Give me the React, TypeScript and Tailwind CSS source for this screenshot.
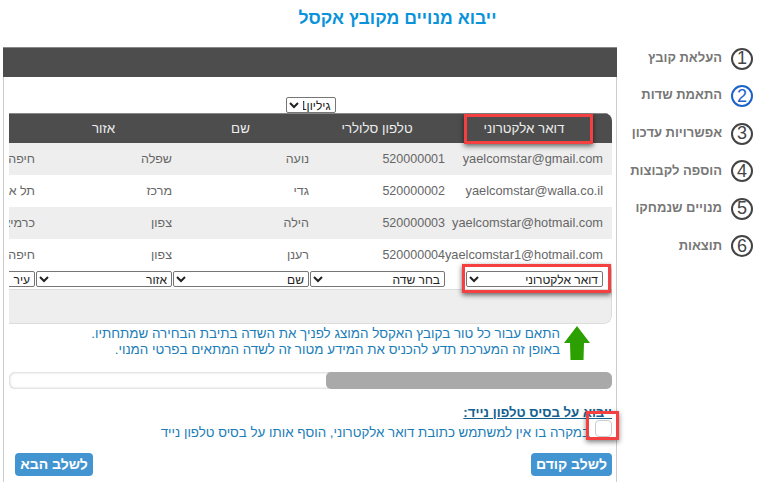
const steps = ["העלאת קובץ", "התאמת שדות", "אפשרויות עדכון", "הוספה לקבוצות", "מנויים שנמחקו", "תוצאות"];

const rows = [
  ["yaelcomstar@gmail.com", "520000001", "נועה", "שפלה", "חיפה"],
  ["yaelcomstar@walla.co.il", "520000002", "גדי", "מרכז", "תל אביב"],
  ["yaelcomstar@hotmail.com", "520000003", "הילה", "צפון", "כרמיאל"],
  ["yaelcomstar1@hotmail.com", "520000004", "רענן", "צפון", "חיפה"],
];

const headers = ["דואר אלקטרוני", "טלפון סלולרי", "שם", "אזור", ""];
const fields = ["דואר אלקטרוני", "בחר שדה", "שם", "אזור", "עיר"];
const colWidths = ["w-[158px]", "w-[136px]", "w-[137px]", "w-[137px]", "w-[137px]"];

function FieldSelect({ value, className }: { value: string; className: string }) {
  return (
    <select
      dir="rtl"
      defaultValue={value}
      className={`block h-4 border border-[#767676] rounded-[2px] bg-white text-[12px] leading-none text-[#222] ${className}`}
    >
      <option>{value}</option>
    </select>
  );
}

function Sidebar() {
  return (
    <div className="w-[147px] shrink-0 flex flex-col gap-[14.6px] pr-[11px]">
      {steps.map((s, i) => (
        <div key={s} className="flex items-center gap-[9px] h-[23px]">
          <div
            className={`size-[22px] shrink-0 rounded-full border-2 flex items-center justify-center text-[18px] ${
              i === 1 ? "border-[#1c63c9] text-[#1c63c9]" : "border-[#444] text-[#444]"
            }`}
          >
            {i + 1}
          </div>
          <span className="text-[13px] font-bold text-[#777] whitespace-nowrap pb-[2px]">{s}</span>
        </div>
      ))}
    </div>
  );
}

function DataTable() {
  return (
    <div className="overflow-hidden rounded-tr-[8px] rounded-br-[8px]">
      <div className="flex h-[30px] bg-[#4d4d4d] pr-[9px] border-t border-[#888] text-[13.33px] text-[#eee]">
        {headers.map((h, i) => (
          <div key={i} className={`${colWidths[i]} shrink-0 relative flex items-center justify-center`}>
            {h}
            {i === 0 && (
              <div className="absolute left-[19px] right-[10px] top-0 bottom-[-1px] border-[3px] border-[#f44040] shadow-[0_2px_5px_rgba(0,0,0,0.6)]" />
            )}
          </div>
        ))}
      </div>
      {rows.map((r, ri) => (
        <div key={ri} className={`flex h-8 pr-[9px] items-center text-[12.5px] text-[#666] ${ri % 2 === 0 ? "bg-[#eee]" : "bg-white"}`}>
          {r.map((c, i) => (
            <div key={i} className={`${colWidths[i]} shrink-0 whitespace-nowrap overflow-hidden text-right ${i === 0 ? "text-[12.8px]" : ""}`}>
              {c}
            </div>
          ))}
        </div>
      ))}
      <div className="flex h-[19px] pr-[9px] border-b border-[#ddd]">
        {fields.map((f, i) => (
          <div key={f} className={`${colWidths[i]} shrink-0 relative`}>
            <FieldSelect value={f} className={i === 0 ? "w-[137px]" : i === 1 ? "w-[135px]" : "w-[136px]"} />
            {i === 0 && (
              <div className="absolute left-[17px] right-[-8px] top-[-7px] h-[29px] border-[3px] border-[#f44040] shadow-[0_2px_5px_rgba(0,0,0,0.6)]" />
            )}
          </div>
        ))}
      </div>
      <div className="h-[34px] bg-[#eee] border-b border-r border-[#ddd] rounded-br-[8px]" />
    </div>
  );
}

function UpArrow() {
  return (
    <svg viewBox="0 0 26 34" className="w-[26px] h-[34px] shrink-0">
      <path d="M13 0 L26 17 L20 17 L19.5 34 L6.5 34 L6 17 L0 17 Z" fill="#2ca000" />
    </svg>
  );
}

export default function App() {
  return (
    <div dir="rtl" className="w-[764px] h-[482px] overflow-hidden bg-white pl-[3px] font-['Liberation_Sans',Arial,sans-serif]">
      <h1 className="h-[47px] pt-[5px] pl-[28px] text-center text-[17.6px] font-bold text-[#0a93da]">ייבוא מנויים מקובץ אקסל</h1>
      <div className="flex">
        <Sidebar />
        <div className="w-[614px] h-[435px] flex flex-col">
          <div className="h-[30px] shrink-0 bg-[#4d4d4d] border-t border-[#888]" />
          <div className="flex-1 border-x border-[#ccc] pr-[4px] pl-[5px] flex flex-col">
            <div className="h-[36px] shrink-0 flex justify-center items-end">
              <select dir="rtl" defaultValue="גיליון1" className="h-[16px] w-[50px] border border-[#767676] rounded-[2px] bg-white text-[12px] text-[#222]">
                <option>גיליון1</option>
              </select>
            </div>
            <DataTable />
            <div className="flex items-start gap-[4px] pt-[2px] pr-[22px] text-[13.4px] leading-[16px] text-[#1a7db8]">
              <UpArrow />
              <div className="whitespace-nowrap">
                התאם עבור כל טור בקובץ האקסל המוצג לפניך את השדה בתיבת הבחירה שמתחתיו.
                <br />
                באופן זה המערכת תדע להכניס את המידע מטור זה לשדה המתאים בפרטי המנוי.
              </div>
            </div>
            <div className="mt-[12px] h-[17px] shrink-0 rounded-[6px] bg-white shadow-[inset_0_0_3px_rgba(0,0,0,0.3)] overflow-hidden">
              <div className="w-[286px] h-full bg-[#a9a9a9] rounded-l-[5px]" />
            </div>
            <div className="mt-[14px] text-[13.2px] font-bold text-[#14618f] underline h-[16px] whitespace-nowrap">ייבוא על בסיס טלפון נייד:</div>
            <div className="relative flex items-center h-[20px] text-[13.33px] text-[#1a7db8] whitespace-nowrap">
              <span className="relative z-10 size-[17px] shrink-0 rounded-[4px] border border-[#ccc] bg-white -mt-[2px]" />
              <span className="mr-[5px] pt-[8px]">במקרה בו אין למשתמש כתובת דואר אלקטרוני, הוסף אותו על בסיס טלפון נייד</span>
              <div className="absolute z-20 right-[-7px] top-[-8px] w-[33px] h-[29px] border-[3px] border-[#f44040] shadow-[0_2px_5px_rgba(0,0,0,0.5)]" />
            </div>
            <div className="mt-[14px] flex justify-between pl-[6px]">
              <button className="w-[81px] h-[23px] rounded-[4px] bg-[#4295d1] text-white text-[14px] font-bold">לשלב קודם</button>
              <button className="w-[78px] h-[23px] rounded-[4px] bg-[#4295d1] text-white text-[14px] font-bold">לשלב הבא</button>
            </div>
          </div>
        </div>
      </div>
    </div>
  );
}
